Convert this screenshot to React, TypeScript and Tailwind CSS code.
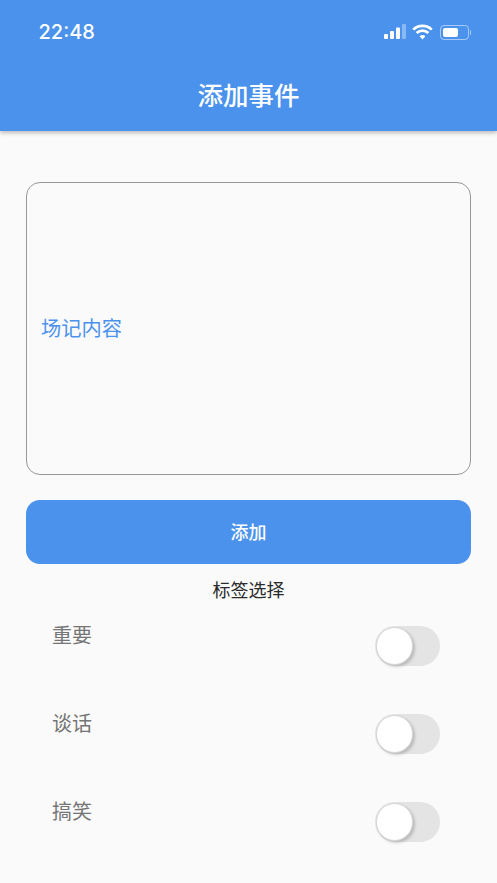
const cjk = "font-['Noto_Sans_CJK_SC','Noto_Sans_CJK_JP',sans-serif]";

function StatusIcons() {
  return (
    <div className="flex items-center gap-[6.5px]">
      <svg width="22" height="16" viewBox="0 0 22 16">
        <rect x="0" y="10" width="4" height="5" rx="1" fill="#fff" />
        <rect x="6" y="7" width="4" height="8" rx="1" fill="#fff" />
        <rect x="12" y="3.5" width="4" height="11.5" rx="1" fill="#fff" />
        <rect x="18" y="0" width="4" height="15" rx="1" fill="#fff" fillOpacity="0.35" />
      </svg>
      <svg width="21" height="16" viewBox="0 0 21 16" fill="none" stroke="#fff" strokeWidth="2.6">
        <path d="M1.2 5.6a13.5 13.5 0 0 1 18.6 0" />
        <path d="M4.6 9a8.6 8.6 0 0 1 11.8 0" />
        <path d="M10.5 15.4 7.6 12.3a4.2 4.2 0 0 1 5.8 0z" fill="#fff" stroke="none" />
      </svg>
      <div className="flex items-center">
        <div className="flex h-[15px] w-[29px] items-center rounded-[4px] border border-white/50 p-[2px]">
          <div className="h-full w-[15px] rounded-[2px] bg-white" />
        </div>
        <div className="ml-[1px] h-[5px] w-[1.5px] rounded-r-sm bg-white/50" />
      </div>
    </div>
  );
}

function TagRow({ label }: { label: string }) {
  return (
    <div className="flex h-[88px] shrink-0 items-start justify-between pl-[52px] pr-[57px]">
      <span className="text-[20px] leading-[30px] text-[#757575]">{label}</span>
      <div className="relative mt-[6px] h-10 w-[65px] rounded-full bg-[#e4e4e4]">
        <div className="absolute left-[1px] top-[1px] h-[38px] w-[37px] rounded-full border border-[#d4d4d4] bg-white shadow-[2px_2px_3px_rgba(0,0,0,0.18)]" />
      </div>
    </div>
  );
}

export default function App() {
  return (
    <div className={`flex h-[883px] w-[497px] flex-col overflow-hidden bg-[#fafafa] ${cjk}`}>
      <header className="relative z-10 h-[131px] shrink-0 bg-[#4a92ec] shadow-[0_2px_4px_rgba(0,0,0,0.25)]">
        <div className="flex h-[64px] items-center justify-between pl-[38.5px] pr-[26px]">
          <span className="font-['Inter',sans-serif] text-[20px] font-medium text-white">22:48</span>
          <StatusIcons />
        </div>
        <h1 className="text-center text-[25.5px] font-medium leading-[60px] text-white">添加事件</h1>
      </header>

      <main className="flex shrink-0 flex-col px-[26px] pt-[51px]">
        <div className="flex h-[293px] items-center rounded-[14px] border-[1.5px] border-[#989898] px-[14px]">
          <span className="text-[20.25px] text-[#4a92ec]">场记内容</span>
        </div>
        <button className="mt-[25px] h-[64px] rounded-[14px] bg-[#4a92ec] pb-[2px] text-[18px] font-medium text-white">添加</button>
        <p className="mt-[11px] text-center text-[18px] leading-[28px] text-[#2b2b2b]">标签选择</p>
      </main>

      <section className="mt-[17px] flex shrink-0 flex-col">
        <TagRow label="重要" />
        <TagRow label="谈话" />
        <TagRow label="搞笑" />
      </section>
    </div>
  );
}
